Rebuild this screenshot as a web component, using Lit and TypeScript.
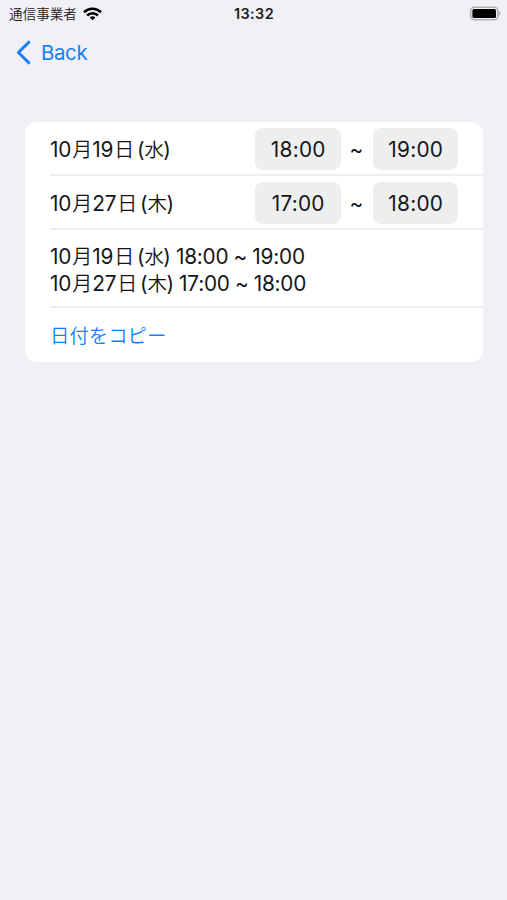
import { LitElement, html, css } from "lit";
import { customElement, property } from "lit/decorators.js";

interface Slot {
  month: string;
  day: string;
  weekday: string;
  from: string;
  to: string;
}

const slots: Slot[] = [
  { month: "10", day: "19", weekday: "水", from: "18:00", to: "19:00" },
  { month: "10", day: "27", weekday: "木", from: "17:00", to: "18:00" },
];

const dateLabel = (s: Slot) =>
  html`<span class="date">${s.month}<span class="cjk unit">月</span>${s.day}<span class="cjk unit">日</span> (<span class="cjk weekday">${s.weekday}</span>)</span>`;

const dateStyles = css`
  .date {
    letter-spacing: -0.15px;
    word-spacing: -2.8px;
  }
  .cjk {
    font-family: "Noto Sans CJK JP", sans-serif;
    font-size: 20px;
    font-weight: 350;
    line-height: 1;
  }
  .unit {
    margin-left: 1px;
  }
  .weekday {
    font-size: 19.5px;
    letter-spacing: -0.6px;
  }
`;

@customElement("status-bar")
class StatusBar extends LitElement {
  static styles = css`
    :host {
      display: grid;
      grid-template-columns: 1fr auto 1fr;
      align-items: center;
      height: 27px;
      padding: 0 6px 0 9px;
      color: #1b1b1e;
    }
    .carrier {
      display: flex;
      align-items: center;
      gap: 6px;
      font: 350 13.6px/27px "Noto Sans CJK JP", sans-serif;
      white-space: nowrap;
    }
    .wifi {
      width: 19px;
      height: 14px;
    }
    .clock {
      font: 600 14.4px/27px Inter, sans-serif;
      letter-spacing: 0.45px;
      margin-right: 2px;
    }
    .battery {
      justify-self: end;
      width: 32px;
      height: 15px;
    }
  `;

  render() {
    return html`
      <div class="carrier">
        <span>通信事業者</span>
        <svg class="wifi" viewBox="0 0 19 14" fill="none" stroke="#000" stroke-width="2.7">
          <path d="M1 5.2C5.8.6 13.2.6 18 5.2" />
          <path d="M4.1 8.4C7.2 5.5 11.8 5.5 14.9 8.4" />
          <path d="M6.7 10.4C8.3 9 10.7 9 12.3 10.4L9.5 13.3Z" fill="#000" stroke="none" />
        </svg>
      </div>
      <div class="clock">13:32</div>
      <svg class="battery" viewBox="0 0 32 15">
        <rect x="1.7" y="1.2" width="27.2" height="12.6" rx="3.8" fill="none" stroke="#b2b2b5" stroke-width="1.6" />
        <rect x="3.4" y="3" width="23.6" height="9" rx="1.6" fill="#000" />
        <path d="M30 5.2C32.2 6.2 32.2 8.8 30 9.8Z" fill="#b2b2b5" />
      </svg>
    `;
  }
}

@customElement("time-row")
class TimeRow extends LitElement {
  @property({ attribute: false }) slotData!: Slot;

  static styles = [
    dateStyles,
    css`
      :host {
        display: flex;
        align-items: center;
        justify-content: space-between;
        box-sizing: border-box;
        height: 100%;
        padding: 2px 25px 0 0;
      }
      .times {
        display: flex;
        align-items: center;
      }
      .pill {
        width: 85.5px;
        height: 42px;
        border-radius: 8px;
        background: #eeeeef;
        text-align: center;
        text-indent: 1px;
        line-height: 43px;
        letter-spacing: 0.25px;
      }
      .tilde {
        width: 32px;
        padding-top: 1px;
        text-align: center;
      }
    `,
  ];

  render() {
    const s = this.slotData;
    return html`
      <div class="label">${dateLabel(s)}</div>
      <div class="times">
        <div class="pill">${s.from}</div>
        <div class="tilde">~</div>
        <div class="pill">${s.to}</div>
      </div>
    `;
  }
}

@customElement("app-root")
class AppRoot extends LitElement {
  static styles = [
    dateStyles,
    css`
      :host {
        display: block;
        height: 900px;
        background: #f1f0f6;
        color: #161618;
        font: 20.8px/27px Inter, "Noto Sans CJK JP", sans-serif;
      }
      .nav {
        display: flex;
        align-items: center;
        gap: 10px;
        height: 51px;
        padding-left: 16px;
        color: #1480fc;
      }
      .back {
        font-size: 20.4px;
        letter-spacing: -0.35px;
      }
      .chevron {
        width: 15px;
        height: 25px;
      }
      .card {
        margin: 44px 24px 0 25px;
        padding-left: 25px;
        border-radius: 12px;
        background: #fff;
      }
      .row {
        box-sizing: border-box;
        height: 54px;
        border-bottom: 2px solid #eeeef0;
      }
      .summary {
        height: 78px;
        padding-top: 13px;
        letter-spacing: -0.2px;
        word-spacing: -0.5px;
      }
      .copy {
        display: flex;
        align-items: center;
        padding-bottom: 2px;
        border-bottom: none;
        color: #1480fc;
        font: 350 19.4px/27px "Noto Sans CJK JP", sans-serif;
      }
    `,
  ];

  render() {
    return html`
      <status-bar></status-bar>
      <div class="nav">
        <svg class="chevron" viewBox="0 0 15 25" fill="none" stroke="#1480fc" stroke-width="3" stroke-linecap="round" stroke-linejoin="round">
          <path d="M12.8 2.2L2.4 12.5L12.8 22.8" />
        </svg>
        <span class="back">Back</span>
      </div>
      <div class="card">
        ${slots.map((s) => html`<div class="row"><time-row .slotData=${s}></time-row></div>`)}
        <div class="row summary">
          ${slots.map((s) => html`<div>${dateLabel(s)} ${s.from} ~ ${s.to}</div>`)}
        </div>
        <div class="row copy">日付をコピー</div>
      </div>
    `;
  }
}
